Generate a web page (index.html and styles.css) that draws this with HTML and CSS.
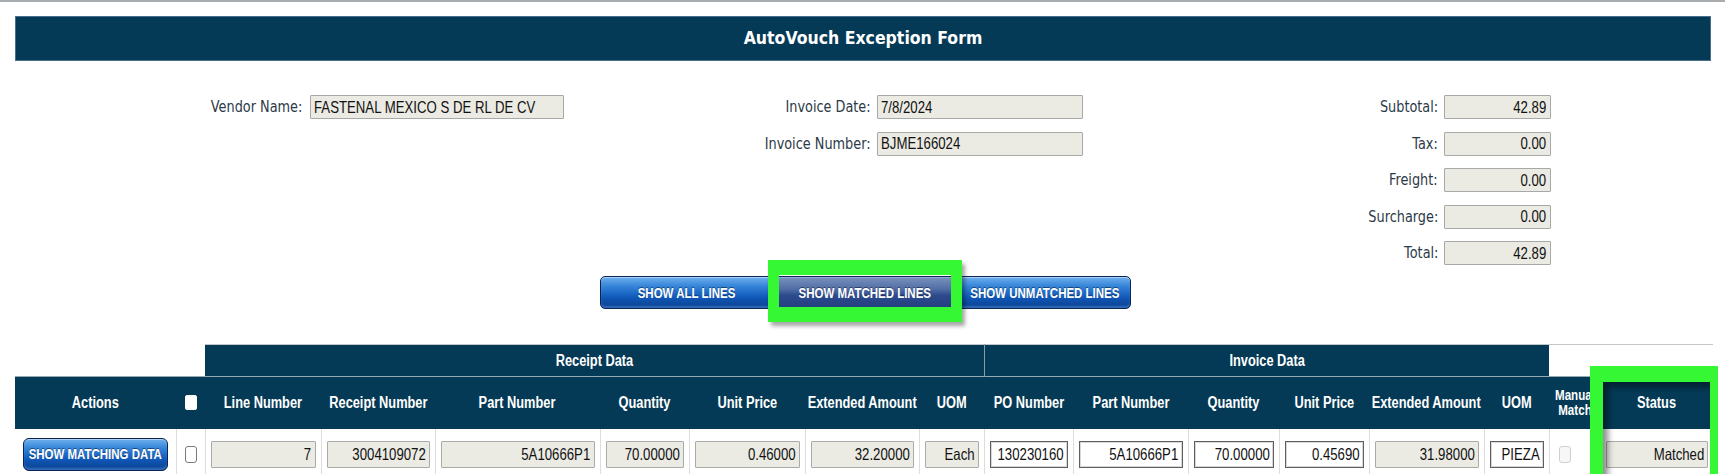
FILE: index.html
```html
<!DOCTYPE html>
<html lang="en">
<head>
<meta charset="utf-8">
<title>AutoVouch Exception Form</title>
<link rel="stylesheet" href="styles.css">
</head>
<body>
<div class="page">
  <div class="titlebar">AutoVouch Exception Form</div>

  <div class="summary">
    <div class="group g-vendor">
      <div class="lbl"><span class="sx">Vendor Name:</span></div>
      <div class="fld left"><span class="sx">FASTENAL MEXICO S DE RL DE CV</span></div>
    </div>
    <div class="group g-invoice">
      <div class="lbl"><span class="sx">Invoice Date:</span></div>
      <div class="fld left"><span class="sx">7/8/2024</span></div>
      <div class="lbl"><span class="sx">Invoice Number:</span></div>
      <div class="fld left"><span class="sx">BJME166024</span></div>
    </div>
    <div class="group g-totals">
      <div class="lbl"><span class="sx">Subtotal:</span></div>
      <div class="fld"><span class="sx">42.89</span></div>
      <div class="lbl"><span class="sx">Tax:</span></div>
      <div class="fld"><span class="sx">0.00</span></div>
      <div class="lbl"><span class="sx">Freight:</span></div>
      <div class="fld"><span class="sx">0.00</span></div>
      <div class="lbl"><span class="sx">Surcharge:</span></div>
      <div class="fld"><span class="sx">0.00</span></div>
      <div class="lbl"><span class="sx">Total:</span></div>
      <div class="fld"><span class="sx">42.89</span></div>
    </div>
  </div>

  <div class="filters">
    <button class="btn seg seg-left"><span class="sx">SHOW ALL LINES</span></button>
    <span class="sel-wrap">
      <button class="btn seg seg-mid selected"><span class="sx">SHOW MATCHED LINES</span></button>
      <span class="highlight hl-btn"></span>
    </span>
    <button class="btn seg seg-right"><span class="sx">SHOW UNMATCHED LINES</span></button>
  </div>

  <div class="grid-wrap">
    <table class="lines">
      <colgroup>
        <col class="c-actions"><col class="c-check">
        <col class="c-116"><col class="c-114"><col class="c-165"><col class="c-89"><col class="c-116"><col class="c-114"><col class="c-65">
        <col class="c-89"><col class="c-115"><col class="c-91"><col class="c-90"><col class="c-115"><col class="c-65">
        <col class="c-manual"><col class="c-status">
      </colgroup>
      <thead>
        <tr class="grp-row">
          <th class="blank" colspan="2"></th>
          <th class="grp grp-receipt" colspan="7"><div class="hc"><span class="sx">Receipt Data</span></div></th>
          <th class="grp" colspan="6"><div class="hc"><span class="sx">Invoice Data</span></div></th>
          <th class="blank blank-right" colspan="2"></th>
        </tr>
        <tr class="hdr-row">
          <th><div class="hc"><span class="sx">Actions</span></div></th>
          <th><div class="hc"><span class="cbx cbx-head"></span></div></th>
          <th><div class="hc"><span class="sx">Line Number</span></div></th>
          <th><div class="hc"><span class="sx">Receipt Number</span></div></th>
          <th><div class="hc"><span class="sx">Part Number</span></div></th>
          <th><div class="hc"><span class="sx">Quantity</span></div></th>
          <th><div class="hc"><span class="sx">Unit Price</span></div></th>
          <th><div class="hc"><span class="sx">Extended Amount</span></div></th>
          <th><div class="hc"><span class="sx">UOM</span></div></th>
          <th><div class="hc"><span class="sx">PO Number</span></div></th>
          <th><div class="hc"><span class="sx">Part Number</span></div></th>
          <th><div class="hc"><span class="sx">Quantity</span></div></th>
          <th><div class="hc"><span class="sx">Unit Price</span></div></th>
          <th><div class="hc"><span class="sx">Extended Amount</span></div></th>
          <th><div class="hc"><span class="sx">UOM</span></div></th>
          <th class="manual"><div class="hc"><span class="sx">Manual<br>Match</span></div></th>
          <th><div class="hc"><span class="sx">Status</span></div></th>
        </tr>
      </thead>
      <tbody>
        <tr class="data-row">
          <td class="first"><button class="btn btn-match"><span class="sx">SHOW MATCHING DATA</span></button></td>
          <td class="center"><span class="cbx"></span></td>
          <td><div class="cell ro"><span class="sx">7</span></div></td>
          <td><div class="cell ro"><span class="sx">3004109072</span></div></td>
          <td><div class="cell ro"><span class="sx">5A10666P1</span></div></td>
          <td><div class="cell ro"><span class="sx">70.00000</span></div></td>
          <td><div class="cell ro"><span class="sx">0.46000</span></div></td>
          <td><div class="cell ro"><span class="sx">32.20000</span></div></td>
          <td><div class="cell ro"><span class="sx">Each</span></div></td>
          <td><div class="cell ed"><span class="sx">130230160</span></div></td>
          <td><div class="cell ed"><span class="sx">5A10666P1</span></div></td>
          <td><div class="cell ed"><span class="sx">70.00000</span></div></td>
          <td><div class="cell ed"><span class="sx">0.45690</span></div></td>
          <td><div class="cell ro"><span class="sx">31.98000</span></div></td>
          <td><div class="cell ed"><span class="sx">PIEZA</span></div></td>
          <td class="manual-cell"><span class="cbx cbx-disabled"></span></td>
          <td><div class="cell ro"><span class="sx">Matched</span></div></td>
        </tr>
      </tbody>
    </table>
    <div class="highlight hl-status"></div>
  </div>
</div>
</body>
</html>
```

FILE: styles.css
```css
* {
  box-sizing: border-box;
}

html, body {
  margin: 0;
  padding: 0;
  background: #ffffff;
}

body {
  border-top: 2px solid #a9acae;
  font-family: "Liberation Sans", Arial, sans-serif;
  color: #111;
}

.page {
  padding: 14px 14px 0 15px;
}

/* horizontally squeezed text (the reference is a narrow rendering) */
.sx {
  display: inline-block;
  white-space: nowrap;
  flex: none;
  transform: scaleX(0.8);
  transform-origin: center center;
}

/* ---------- title bar ---------- */
.titlebar {
  height: 45px;
  background: #053a56;
  border: 1px solid #47708a;
  color: #ffffff;
  text-align: center;
  line-height: 43px;
  font-family: "DejaVu Sans Condensed", "DejaVu Sans", sans-serif;
  font-stretch: condensed;
  font-weight: bold;
  font-size: 17.5px;
}

/* ---------- summary fields ---------- */
.summary {
  display: flex;
  align-items: flex-start;
  margin-top: 34px;
}

.group {
  display: grid;
  row-gap: 12.5px;
  align-items: center;
}

.g-vendor {
  margin-left: 87px;
  grid-template-columns: 200px 254px;
  column-gap: 8px;
}

.g-invoice {
  margin-left: 157px;
  grid-template-columns: 150px 206px;
  column-gap: 6px;
}

.g-totals {
  margin-left: 235px;
  grid-template-columns: 120px 107px;
  column-gap: 6px;
}

.lbl {
  display: flex;
  justify-content: flex-end;
  align-items: center;
  font-family: "DejaVu Sans", sans-serif;
  font-size: 15.5px;
  color: #2c3a48;
}

.lbl .sx {
  transform: scaleX(0.83);
  transform-origin: right center;
}

.fld {
  height: 24px;
  display: flex;
  align-items: center;
  justify-content: flex-end;
  overflow: hidden;
  border: 1px solid #a7a9a9;
  border-radius: 1px;
  background: #ebebe4;
  padding: 0 4px;
  font-size: 16.5px;
  color: #111;
}

.fld .sx {
  transform-origin: right center;
}

.fld.left {
  justify-content: flex-start;
  padding-left: 3px;
}

.fld.left .sx {
  transform-origin: left center;
}

/* ---------- buttons ---------- */
.btn {
  display: inline-flex;
  align-items: center;
  justify-content: center;
  overflow: hidden;
  font-family: "Liberation Sans", Arial, sans-serif;
  font-weight: bold;
  color: #ffffff;
  text-shadow: 0 -1px 0 rgba(0, 0, 0, 0.45);
  border: 1px solid #0b2553;
  background: linear-gradient(to bottom,
    #6eb0ee 0%,
    #3584d8 30%,
    #1c68c6 52%,
    #0f54b2 70%,
    #0c428f 100%);
  box-shadow: inset 0 1px 0 rgba(255, 255, 255, 0.45), inset 0 -2px 2px rgba(120, 180, 255, 0.35);
  padding: 0;
  margin: 0;
  cursor: pointer;
}

.btn .sx {
  transform: scaleX(0.82);
}

.filters {
  display: flex;
  justify-content: center;
  margin-top: 11px;
  padding-left: 5px;
}

.seg {
  height: 33px;
  font-size: 14px;
}

.seg-left {
  width: 172px;
  border-radius: 5px 0 0 5px;
}

.seg-mid {
  width: 186px;
  border-left: none;
  border-right: none;
}

.seg-right {
  width: 173px;
  border-radius: 0 5px 5px 0;
}

.seg-mid.selected {
  background: linear-gradient(to bottom,
    #7a92bd 0%,
    #4f6ca4 40%,
    #2b4a8c 60%,
    #233f80 100%);
  box-shadow: inset 0 0 0 1px rgba(170, 190, 225, 0.6);
}

.sel-wrap {
  position: relative;
  display: block;
}

.highlight {
  position: absolute;
  border-style: solid;
  border-color: #35f734;
  pointer-events: none;
}

.hl-btn {
  left: -4px;
  right: -4px;
  top: -16px;
  bottom: -13px;
  border-width: 15px 11px 15px 11px;
  box-shadow: 3px 4px 4px rgba(0, 0, 0, 0.35);
}

/* ---------- lines table ---------- */
.grid-wrap {
  position: relative;
  margin-top: 35px;
  width: 1698px;
}

.lines {
  border-collapse: collapse;
  table-layout: fixed;
  width: 1698px;
}

.c-actions { width: 161px; }
.c-check { width: 29px; }
.c-116 { width: 116px; }
.c-114 { width: 114px; }
.c-165 { width: 165px; }
.c-89 { width: 89px; }
.c-65 { width: 65px; }
.c-115 { width: 115px; }
.c-91 { width: 91px; }
.c-90 { width: 90px; }
.c-manual { width: 51px; }
.c-status { width: 113px; }

.lines th {
  background: #053a56;
  color: #ffffff;
  font-family: "Liberation Sans", Arial, sans-serif;
  font-weight: bold;
  font-size: 16px;
  padding: 0;
}

.hc {
  display: flex;
  justify-content: center;
  align-items: center;
  height: 100%;
}

.grp-row th {
  height: 32px;
}

.grp-row .grp {
  border-top: 1px solid #c3c7ca;
}

.grp-row .grp-receipt {
  border-right: 1px solid #8a9ba7;
}

.grp-row .blank {
  background: transparent;
}

.grp-row .blank-right {
  border-top: 1px solid #c3c7ca;
}

.hdr-row th {
  height: 52px;
  border-top: 1px solid #98a9b5;
}

.hdr-row th.manual {
  font-size: 14.5px;
  line-height: 15px;
}

.hdr-row th.manual .sx {
  text-align: center;
}

.data-row td {
  height: 51px;
  padding: 0 5px;
  vertical-align: middle;
  border-left: 1px solid #dddddd;
}

.data-row td.first {
  border-left: none;
  text-align: center;
}

.data-row td.center {
  text-align: center;
}

.data-row td.manual-cell {
  padding-left: 9px;
}

.btn-match {
  width: 145px;
  height: 33px;
  font-size: 14px;
  border-radius: 6px;
}

.cell {
  height: 27px;
  display: flex;
  align-items: center;
  justify-content: flex-end;
  overflow: hidden;
  padding: 0 3px;
  font-size: 16.5px;
  color: #111;
}

.cell .sx {
  transform-origin: right center;
}

.cell.ro {
  background: #ebebe4;
  border: 1px solid #a9abab;
  border-radius: 1px;
}

.cell.ed {
  background: #ffffff;
  border: 1px solid #5f5f5f;
  box-shadow: inset 0 0 0 1px #d8d8d8;
}

.cbx {
  display: inline-block;
  width: 12px;
  height: 17px;
  border: 1px solid #7b7b7b;
  border-radius: 3px;
  background: #ffffff;
  vertical-align: middle;
}

.cbx-head {
  height: 15px;
  border-color: #ffffff;
  border-radius: 2px;
}

.cbx-disabled {
  border-color: #cfcfcf;
  background: #f7f7f7;
}

.hl-status {
  left: 1575px;
  top: 22px;
  width: 128px;
  height: 150px;
  border-width: 16px 8px 13px 13px;
  box-shadow: inset 5px 5px 6px rgba(0, 0, 0, 0.45);
}
```
